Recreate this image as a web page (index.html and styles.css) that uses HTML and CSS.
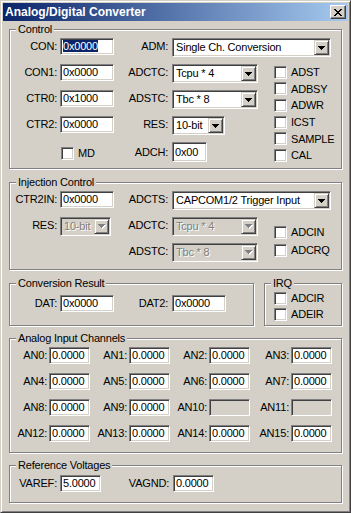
FILE: index.html
```html
<!DOCTYPE html>
<html lang="en">
<head>
    <meta charset="UTF-8">
    <title>Analog/Digital Converter</title>
    <link rel="stylesheet" href="styles.css">
</head>
<body>
<div class="window">
    <div class="titlebar">
        <span class="title">Analog/Digital Converter</span>
        <span class="close">
            <svg width="8" height="7" viewBox="0 0 8 7"><path d="M0 0h2v1H0zM6 0h2v1H6zM1 1h2v1H1zM5 1h2v1H5zM2 2h4v1H2zM3 3h2v1H3zM2 4h4v1H2zM1 5h2v1H1zM5 5h2v1H5zM0 6h2v1H0zM6 6h2v1H6z"/></svg>
        </span>
    </div>

    <div class="client">
        <fieldset class="group">
            <legend>Control</legend>
            <div class="grid ctrl">
                <div class="checks list-ctrl">
                    <label class="check"><span class="box"></span>ADST</label>
                    <label class="check"><span class="box"></span>ADBSY</label>
                    <label class="check"><span class="box"></span>ADWR</label>
                    <label class="check"><span class="box"></span>ICST</label>
                    <label class="check"><span class="box"></span>SAMPLE</label>
                    <label class="check"><span class="box"></span>CAL</label>
                </div>
                <span class="lbl">CON:</span><span class="edit w54"><span class="sel">0x0000</span></span>
                <span class="lbl lbl2">ADM:</span>
                <span class="combo w159 span2"><span class="val">Single Ch. Conversion</span><span class="drop"><svg width="7" height="4" viewBox="0 0 7 4"><path d="M0 0h7v1H0zM1 1h5v1H1zM2 2h3v1H2zM3 3h1v1H3z"/></svg></span></span>

                <span class="lbl">CON1:</span><span class="edit w54">0x0000</span>
                <span class="lbl lbl2">ADCTC:</span>
                <span class="combo w86"><span class="val">Tcpu * 4</span><span class="drop"><svg width="7" height="4" viewBox="0 0 7 4"><path d="M0 0h7v1H0zM1 1h5v1H1zM2 2h3v1H2zM3 3h1v1H3z"/></svg></span></span>

                <span class="lbl">CTR0:</span><span class="edit w54">0x1000</span>
                <span class="lbl lbl2">ADSTC:</span>
                <span class="combo w86"><span class="val">Tbc * 8</span><span class="drop"><svg width="7" height="4" viewBox="0 0 7 4"><path d="M0 0h7v1H0zM1 1h5v1H1zM2 2h3v1H2zM3 3h1v1H3z"/></svg></span></span>

                <span class="lbl">CTR2:</span><span class="edit w54">0x0000</span>
                <span class="lbl lbl2">RES:</span>
                <span class="combo w53"><span class="val">10-bit</span><span class="drop"><svg width="7" height="4" viewBox="0 0 7 4"><path d="M0 0h7v1H0zM1 1h5v1H1zM2 2h3v1H2zM3 3h1v1H3z"/></svg></span></span>

                <label class="check md"><span class="box"></span>MD</label>
                <span class="lbl lbl2 tall">ADCH:</span><span class="edit w35 tall">0x00</span>
            </div>
        </fieldset>

        <fieldset class="group">
            <legend>Injection Control</legend>
            <div class="grid ctrl">
                <div class="checks list-inj">
                    <label class="check"><span class="box"></span>ADCIN</label>
                    <label class="check"><span class="box"></span>ADCRQ</label>
                </div>
                <span class="lbl">CTR2IN:</span><span class="edit w54">0x0000</span>
                <span class="lbl lbl2">ADCTS:</span>
                <span class="combo w159 span2"><span class="val">CAPCOM1/2 Trigger Input</span><span class="drop"><svg width="7" height="4" viewBox="0 0 7 4"><path d="M0 0h7v1H0zM1 1h5v1H1zM2 2h3v1H2zM3 3h1v1H3z"/></svg></span></span>

                <span class="lbl">RES:</span>
                <span class="combo w51 off"><span class="val">10-bit</span><span class="drop"><svg width="8" height="5" viewBox="0 0 8 5"><path class="hi" d="M1 1h7v1H1zM2 2h5v1H2zM3 3h3v1H3zM4 4h1v1H4z"/><path d="M0 0h7v1H0zM1 1h5v1H1zM2 2h3v1H2zM3 3h1v1H3z"/></svg></span></span>
                <span class="lbl lbl2">ADCTC:</span>
                <span class="combo w86 off"><span class="val">Tcpu * 4</span><span class="drop"><svg width="8" height="5" viewBox="0 0 8 5"><path class="hi" d="M1 1h7v1H1zM2 2h5v1H2zM3 3h3v1H3zM4 4h1v1H4z"/><path d="M0 0h7v1H0zM1 1h5v1H1zM2 2h3v1H2zM3 3h1v1H3z"/></svg></span></span>

                <span class="lbl lbl2 col3">ADSTC:</span>
                <span class="combo w86 off"><span class="val">Tbc * 8</span><span class="drop"><svg width="8" height="5" viewBox="0 0 8 5"><path class="hi" d="M1 1h7v1H1zM2 2h5v1H2zM3 3h3v1H3zM4 4h1v1H4z"/><path d="M0 0h7v1H0zM1 1h5v1H1zM2 2h3v1H2zM3 3h1v1H3z"/></svg></span></span>
            </div>
        </fieldset>

        <div class="result-row">
            <fieldset class="group result">
                <legend>Conversion Result</legend>
                <div class="grid res-grid">
                    <span class="lbl">DAT:</span><span class="edit w54">0x0000</span>
                    <span class="lbl lbl2">DAT2:</span><span class="edit w54">0x0000</span>
                </div>
            </fieldset>
            <fieldset class="group irq">
                <legend>IRQ</legend>
                <div class="checks list-irq">
                    <label class="check"><span class="box"></span>ADCIR</label>
                    <label class="check"><span class="box"></span>ADEIR</label>
                </div>
            </fieldset>
        </div>

        <fieldset class="group analog">
            <legend>Analog Input Channels</legend>
            <div class="grid an-grid">
                <span class="lbl">AN0:</span><span class="edit">0.0000</span>
                <span class="lbl">AN1:</span><span class="edit">0.0000</span>
                <span class="lbl">AN2:</span><span class="edit">0.0000</span>
                <span class="lbl">AN3:</span><span class="edit">0.0000</span>

                <span class="lbl">AN4:</span><span class="edit">0.0000</span>
                <span class="lbl">AN5:</span><span class="edit">0.0000</span>
                <span class="lbl">AN6:</span><span class="edit">0.0000</span>
                <span class="lbl">AN7:</span><span class="edit">0.0000</span>

                <span class="lbl">AN8:</span><span class="edit">0.0000</span>
                <span class="lbl">AN9:</span><span class="edit">0.0000</span>
                <span class="lbl">AN10:</span><span class="edit off"></span>
                <span class="lbl">AN11:</span><span class="edit off"></span>

                <span class="lbl">AN12:</span><span class="edit">0.0000</span>
                <span class="lbl">AN13:</span><span class="edit">0.0000</span>
                <span class="lbl">AN14:</span><span class="edit">0.0000</span>
                <span class="lbl">AN15:</span><span class="edit">0.0000</span>
            </div>
        </fieldset>

        <fieldset class="group ref">
            <legend>Reference Voltages</legend>
            <div class="grid ref-grid">
                <span class="lbl">VAREF:</span><span class="edit">5.0000</span>
                <span class="lbl lbl2">VAGND:</span><span class="edit">0.0000</span>
            </div>
        </fieldset>
    </div>
</div>
</body>
</html>
```

FILE: styles.css
```css
body {
    margin: 0;
    font-family: "Liberation Sans", Arial, sans-serif;
    font-size: 11px;
    letter-spacing: -0.2px;
    color: #000;
    background: #d4d0c8;
}
.window {
    width: 351px;
    height: 513px;
    box-sizing: border-box;
    padding: 2px;
    background: #d4d0c8;
    border: 1px solid;
    border-color: #d4d0c8 #404040 #404040 #d4d0c8;
    box-shadow: inset 1px 1px 0 #fff, inset -1px -1px 0 #808080;
}

/* title bar */
.titlebar {
    height: 18px;
    display: flex;
    align-items: center;
    justify-content: space-between;
    padding: 0 2px;
    background: linear-gradient(to right, #0a246a, #a6caf0);
}
.title {
    color: #fff;
    font-weight: bold;
    font-size: 12px;
    letter-spacing: 0;
}
.close {
    width: 16px;
    height: 14px;
    box-sizing: border-box;
    display: flex;
    align-items: center;
    justify-content: center;
    background: #d4d0c8;
    border: 1px solid;
    border-color: #fff #404040 #404040 #fff;
    box-shadow: inset -1px -1px 0 #808080;
}
.close svg, .drop svg {
    display: block;
}

.client {
    padding: 2px 6px 0;
}

/* group boxes */
.group {
    margin: 0 0 7px;
    padding: 0 2px;
    min-width: 0;
    border: 1px solid #808080;
    box-shadow: inset 1px 1px 0 #fff, 1px 1px 0 #fff;
}
.group legend {
    margin-left: 4px;
    padding: 0 2px;
    line-height: 13px;
    background: #d4d0c8;
}

.grid {
    display: grid;
    align-items: start;
    justify-items: start;
}
.ctrl {
    grid-template-columns: 48px 54px 58px 102px 1fr;
    grid-auto-rows: 26px;
    padding-top: 2px;
}
.res-grid {
    grid-template-columns: 48px 54px 58px 54px;
    padding: 5px 0 13px;
}
.an-grid {
    grid-template-columns: 37px 41px 39px 41px 39px 41px 41px 41px;
    grid-auto-rows: 26px;
    padding: 2px 0 1px;
}
.ref-grid {
    grid-template-columns: 48px 41px 72px 41px;
    padding: 3px 0 10px;
}

.lbl {
    justify-self: stretch;
    text-align: right;
    padding-right: 3px;
    line-height: 17px;
    white-space: nowrap;
}
.lbl2 {
    padding-right: 4px;
}
.an-grid .lbl {
    padding-right: 2px;
}
.lbl.tall {
    line-height: 20px;
}
.col3 {
    grid-column: 3;
}
.span2 {
    grid-column: span 2;
}

/* edit fields */
.edit {
    display: block;
    box-sizing: border-box;
    width: 41px;
    height: 17px;
    padding: 1px 2px;
    line-height: 13px;
    white-space: nowrap;
    overflow: hidden;
    background: #fff;
    border: 1px solid;
    border-color: #808080 #fff #fff #808080;
    box-shadow: inset 1px 1px 0 #404040, inset -1px -1px 0 #d4d0c8;
}
.edit.tall {
    height: 20px;
    line-height: 16px;
}
.edit.off {
    background: #d4d0c8;
}
.w35 { width: 35px; }
.w51 { width: 51px; }
.w53 { width: 53px; }
.w54 { width: 54px; }
.w86 { width: 86px; }
.w159 { width: 159px; }
.sel {
    background: #0a246a;
    color: #fff;
}

/* combo boxes */
.combo {
    display: flex;
    box-sizing: border-box;
    height: 19px;
    padding: 1px;
    background: #fff;
    border: 1px solid;
    border-color: #808080 #fff #fff #808080;
    box-shadow: inset 1px 1px 0 #404040, inset -1px -1px 0 #d4d0c8;
}
.combo .val {
    flex: 1;
    padding-left: 2px;
    line-height: 15px;
    white-space: nowrap;
    overflow: hidden;
}
.drop {
    width: 15px;
    box-sizing: border-box;
    display: flex;
    align-items: center;
    justify-content: center;
    background: #d4d0c8;
    border: 1px solid;
    border-color: #d4d0c8 #404040 #404040 #d4d0c8;
    box-shadow: inset 1px 1px 0 #fff, inset -1px -1px 0 #808080;
}
.combo.off {
    background: #d4d0c8;
}
.combo.off .val {
    color: #808080;
    text-shadow: 1px 1px 0 #fff;
}
.combo.off path {
    fill: #808080;
}
.combo.off path.hi {
    fill: #fff;
}

/* check boxes */
.checks {
    display: flex;
    flex-direction: column;
}
.list-ctrl {
    grid-column: 5;
    grid-row: 2 / span 4;
}
.list-ctrl .check {
    height: 16.6px;
}
.list-inj {
    grid-column: 5;
    grid-row: 2 / span 2;
    padding-top: 6px;
}
.list-inj .check {
    height: 18px;
}
.list-irq {
    padding-left: 7px;
}
.list-irq .check {
    height: 16px;
}
.check {
    display: flex;
    align-items: center;
    gap: 4px;
    white-space: nowrap;
}
.box {
    width: 13px;
    height: 13px;
    box-sizing: border-box;
    background: #fff;
    border: 1px solid;
    border-color: #808080 #fff #fff #808080;
    box-shadow: inset 1px 1px 0 #404040, inset -1px -1px 0 #d4d0c8;
}
.md {
    grid-column: 2;
    height: 20px;
    margin-left: 1px;
    margin-top: 1px;
}

.result-row {
    display: flex;
    gap: 10px;
    margin-bottom: 6px;
}
.result-row .group {
    margin: 0;
}
.result {
    flex: 0 0 245px;
    box-sizing: border-box;
}
.irq {
    flex: 1;
}
.analog {
    margin-bottom: 6px;
}
```
